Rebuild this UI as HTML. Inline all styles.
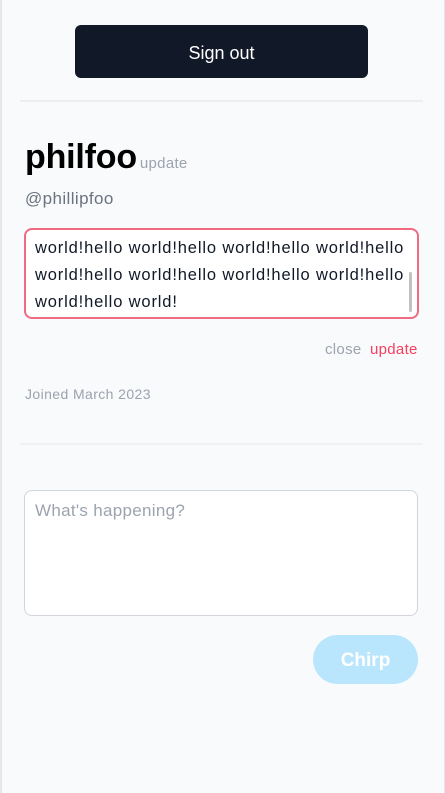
<!DOCTYPE html><html><head><style>
body{margin:0;width:445px;height:793px;background:#f9fafb;font-family:"Liberation Sans",sans-serif;position:relative;overflow:hidden}
.lb{position:absolute;left:0;top:0;width:2px;height:793px;background:#e5e7eb}
.rb{position:absolute;right:0;top:0;width:1px;height:793px;background:#e5e7eb}
.a{position:absolute}
</style></head><body>
<div class="lb"></div><div class="rb"></div>
<div class="a" style="left:75px;top:25px;width:293px;height:53px;background:#111827;border-radius:6px;color:#fff;font-size:18px;text-align:center;line-height:56px">Sign out</div>
<div class="a" style="left:20px;top:100px;width:403px;height:2px;background:#eceef1"></div>
<div class="a" style="left:25px;top:138px;font-size:34px;font-weight:bold;color:#000;letter-spacing:-0.2px">philfoo<span style="font-size:15px;font-weight:normal;color:#9ca3af;letter-spacing:0.3px;margin-left:3px">update</span></div>
<div class="a" style="left:25px;top:189px;font-size:17px;color:#6b7280;letter-spacing:0.4px">@phillipfoo</div>
<div class="a" style="left:24px;top:228px;width:391px;height:87px;border:2px solid #f06a80;border-radius:8px;background:#fff"></div>
<div class="a" style="left:35px;top:235px;width:380px;font-size:16.5px;line-height:27px;color:#111827;letter-spacing:0.85px">world!hello world!hello world!hello world!hello world!hello world!hello world!hello world!hello world!hello world!</div>
<div class="a" style="left:409px;top:272px;width:3px;height:40px;background:#c1c1c1;border-radius:2px"></div>
<div class="a" style="left:325px;top:341px;font-size:15px;color:#9ca3af;letter-spacing:0.3px">close <span style="color:#f43f5e;margin-left:4px">update</span></div>
<div class="a" style="left:25px;top:386px;font-size:14px;color:#9ca3af;letter-spacing:0.4px">Joined March 2023</div>
<div class="a" style="left:20px;top:443px;width:403px;height:2px;background:#f0f1f3"></div>
<div class="a" style="left:24px;top:490px;width:392px;height:124px;border:1px solid #d1d5db;border-radius:8px;background:#fff"></div>
<div class="a" style="left:35px;top:501px;font-size:17px;color:#9ca3af;letter-spacing:0.3px">What's happening?</div>
<div class="a" style="left:313px;top:635px;width:105px;height:49px;background:#bae6fd;border-radius:25px;color:#fff;font-weight:bold;font-size:19px;text-align:center;line-height:51px">Chirp</div>
</body></html>
